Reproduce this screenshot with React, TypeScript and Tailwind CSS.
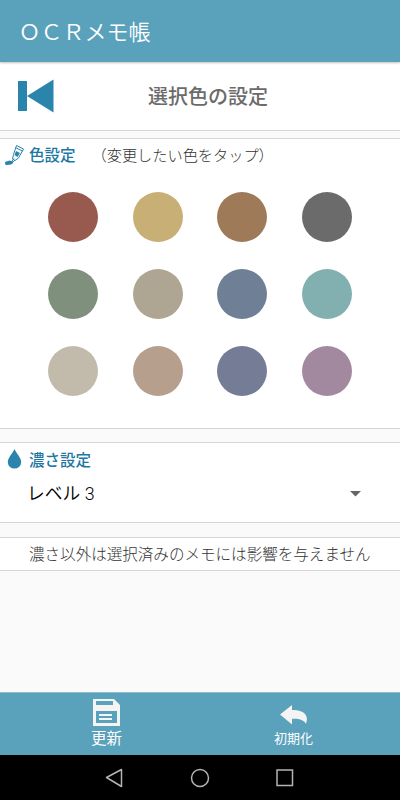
import React from "react";

interface FooterButtonProps {
  /** Text under the icon */
  label: string;
  /** Classes for the label size */
  labelClass: string;
  children: React.ReactNode;
}

// Memo colors, four per row
const colorRows = [
  ["bg-[#985a4e]", "bg-[#c7af76]", "bg-[#9e7a58]", "bg-[#6b6b6b]"],
  ["bg-[#7f917d]", "bg-[#aea693]", "bg-[#6f7f95]", "bg-[#82b0b0]"],
  ["bg-[#c2bbab]", "bg-[#b79f8e]", "bg-[#757c95]", "bg-[#a3899f]"],
];

function FooterButton({ label, labelClass, children }: FooterButtonProps) {
  return (
    <button type="button" className="flex h-full w-1/2 flex-col items-center">
      {children}
      <span className={labelClass}>{label}</span>
    </button>
  );
}

function Header() {
  return (
    <header className="relative z-10 flex h-[62px] shrink-0 items-center bg-[#5aa1bb] pb-0.5 pl-[18.5px] shadow-[0_1px_2px_rgba(0,0,0,0.25)]">
      <h1 className="text-[22px] leading-[32px] font-[350] text-white">ＯＣＲメモ帳</h1>
    </header>
  );
}

function TitleBar() {
  return (
    <div className="flex h-[69px] shrink-0 items-center border-b border-[#d6d6d6] bg-white">
      <button type="button" aria-label="戻る" className="ml-[18px]">
        <svg width="36" height="34" viewBox="0 0 36 34" fill="#2a84ac">
          <path d="M0 2h9v30H0zM9 17 35.500 0.500v33z" />
        </svg>
      </button>
      <h2 className="ml-[94px] text-[20px] leading-[30px] font-medium text-[#6b6b6b]">
        選択色の設定
      </h2>
    </div>
  );
}

function ColorPanel() {
  return (
    <section className="mt-[7px] h-[291px] shrink-0 border-y border-[#d6d6d6] bg-white">
      <div className="flex h-8 items-center">
        {/* Paint tube */}
        <svg
          className="ml-1 shrink-0"
          width="21"
          height="22"
          viewBox="0 0 21 22"
          fill="none"
          stroke="#2a84ac"
          strokeWidth="1"
        >
          <path d="M12.500 1.500 19.500 5 14.500 14 11 16.500 8.500 15 9.500 10.500z" />
          <path d="M11.700 3.700 18.300 7M10 14.500 7 18.500M11 16 8 19" />
          <path d="M12 7 16 9 13.500 13 10.500 11z" fill="#2a84ac" stroke="none" />
          <path d="M1 19C1 17 4 17.500 5.500 16.500L9 17.500C9.500 19.500 8 20.800 3 21 1.500 21 1 20.500 1 19z" fill="#2a84ac" stroke="none" />
        </svg>
        <h3 className="ml-1 text-[15.5px] font-medium text-[#1c78a3]">色設定</h3>
        <p className="ml-[16px] pb-0.5 text-[15.2px] font-light text-[#333]">
          （変更したい色をタップ）
        </p>
      </div>
      <div className="mt-[21px] ml-12 flex flex-col gap-[26.8px]">
        {colorRows.map((row, i) => (
          <div key={i} className="flex gap-[34.5px]">
            {row.map((color) => (
              <button key={color} type="button" className={`size-[50px] rounded-full ${color}`} />
            ))}
          </div>
        ))}
      </div>
    </section>
  );
}

function DensityPanel() {
  return (
    <section className="mt-[13px] h-[81px] shrink-0 border-y border-[#d6d6d6] bg-white">
      <div className="flex h-[34px] items-center pb-0.5">
        <svg className="ml-[7px]" width="15" height="20" viewBox="0 0 15 20" fill="#2a84ac">
          <path d="M7.500 0C9 4 14.200 8.500 14.200 13A6.700 6.600 0 0 1 .8 13C.8 8.500 6 4 7.500 0z" />
        </svg>
        <h3 className="ml-[7px] pt-px text-[15.5px] font-medium text-[#1c78a3]">濃さ設定</h3>
      </div>
      <div className="flex h-[34px] items-center justify-between pr-[39px] pl-[27px]">
        <span className="pt-px font-[Roboto,'Noto_Sans_CJK_JP',sans-serif] text-[17.8px] font-[350] text-black">
          レベル 3
        </span>
        <svg width="11" height="6" viewBox="0 0 11 6" fill="#666">
          <path d="M0 0h11L5.500 5.500z" />
        </svg>
      </div>
    </section>
  );
}

function Footer() {
  return (
    <footer className="mt-auto flex h-[63px] shrink-0 border-t border-[#8fbccd] bg-[#5aa1bb] px-[13px] text-white">
      <FooterButton label="更新" labelClass="mt-px text-[15.5px] leading-[20px]">
        {/* Floppy disk */}
        <svg className="mt-[6px]" width="27" height="27" viewBox="0 0 27 27">
          <path d="M0 0h21l6 6v21H0z" fill="#f4f4f4" />
          <path d="M3 2h17v4H3zM3 12h21v12H3z" fill="#5aa1bb" />
          <path d="M6 15h13v2H6zM6 19h13v2H6z" fill="#f4f4f4" />
        </svg>
      </FooterButton>
      <FooterButton label="初期化" labelClass="mt-1 text-[13px] leading-[18px]">
        {/* Undo arrow */}
        <svg className="mt-3" width="27" height="20" viewBox="0 0 27 20" fill="#f4f4f4">
          <path d="M0 9.500 12 0v5C21 4.500 27 8 27 14.500L26 19C24.500 15.500 20 13.500 12 13.800V19.500z" />
        </svg>
      </FooterButton>
    </footer>
  );
}

function NavigationBar() {
  return (
    <nav className="flex h-[45px] shrink-0 items-center justify-center gap-[65px] bg-black">
      <svg width="20" height="20" viewBox="0 0 20 20" fill="none" stroke="#b4b4b4" strokeWidth="1.500">
        <path d="M16.500 1.500v17L1.500 9.500z" strokeLinejoin="round" />
      </svg>
      <svg width="20" height="20" viewBox="0 0 20 20" fill="none" stroke="#b4b4b4" strokeWidth="1.500">
        <circle cx="10" cy="10" r="8.500" />
      </svg>
      <svg width="20" height="20" viewBox="0 0 20 20" fill="none" stroke="#b4b4b4" strokeWidth="1.500">
        <path d="M2 2h15.500v15.500H2z" />
      </svg>
    </nav>
  );
}

export default function App() {
  return (
    <div className="flex h-[800px] w-[400px] flex-col overflow-hidden bg-[#fafafa] font-['Noto_Sans_CJK_JP',sans-serif]">
      <Header />
      <TitleBar />
      <ColorPanel />
      <DensityPanel />
      <p className="mt-[14px] flex h-[34px] shrink-0 items-center border-y border-[#d6d6d6] bg-white pl-[29px] text-[15.55px] font-light whitespace-nowrap text-[#333]">
        濃さ以外は選択済みのメモには影響を与えません
      </p>
      <Footer />
      <NavigationBar />
    </div>
  );
}
